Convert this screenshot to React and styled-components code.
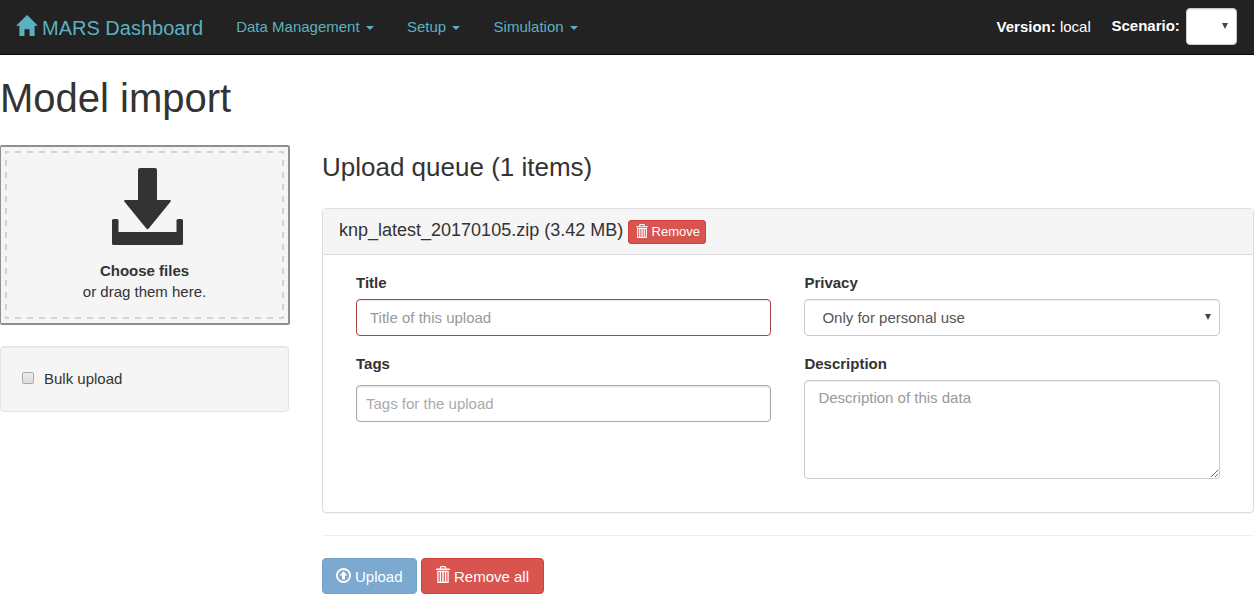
import React from "react";
import styled, { createGlobalStyle } from "styled-components";

const GlobalStyle = createGlobalStyle`
  *, *::before, *::after { box-sizing: border-box; }
  body {
    margin: 0;
    background: #fff;
    color: #333;
    font-family: "Liberation Sans", Arial, sans-serif;
    font-size: 15px;
    line-height: 21px;
    overflow: hidden;
  }
  input, select, textarea, button { font: inherit; }
`;

const Page = styled.div`
  width: 1254px;
`;

const Navbar = styled.nav`
  display: flex;
  align-items: flex-start;
  height: 55px;
  padding: 0 17px 0 16px;
  background: #222;
  border-bottom: 1px solid #090909;
`;

const Brand = styled.a`
  display: flex;
  gap: 4px;
  margin-right: 33px;
  padding-top: 15px;
  color: #5bb1c0;
  font-size: 20px;
  line-height: 26px;
`;

const HomeIcon = styled.svg`
  width: 22px;
  height: 21px;
  fill: currentColor;
`;

const Menu = styled.div`
  display: flex;
  gap: 33.1px;
  flex: 1;
  padding-top: 17px;
`;

const MenuItem = styled.a`
  display: flex;
  align-items: center;
  gap: 6.3px;
  color: #5bb1c0;
  line-height: 20px;

  &::after {
    content: "";
    margin-top: 2px;
    border: 4px solid transparent;
    border-top-color: currentColor;
    border-bottom: 0;
  }
`;

const Version = styled.div`
  margin-right: 20.7px;
  padding-top: 17px;
  line-height: 20px;
  color: #fff;
`;

const Scenario = styled.label`
  display: flex;
  gap: 6.2px;
  padding-top: 8px;
  color: #fff;
  font-weight: bold;
  line-height: 36px;
`;

const SelectBox = styled.div`
  display: grid;
  align-items: center;
  width: ${(p) => p.$width || "100%"};

  &::after {
    content: "";
    grid-area: 1 / 1;
    justify-self: end;
    margin: 0 9px 2px 0;
    border: 3px solid transparent;
    border-top: 6px solid #444;
    border-bottom: 0;
    pointer-events: none;
  }
`;

const Select = styled.select`
  grid-area: 1 / 1;
  appearance: none;
  width: 100%;
  height: 37px;
  padding: 0 17px;
  color: #555;
  background: #fff;
  border: 1px solid #ccc;
  border-radius: 4px;
  box-shadow: inset 0 1px 1px rgba(0, 0, 0, 0.075);
`;

const PageTitle = styled.h1`
  margin: 21px 0 25px;
  font-size: 40px;
  font-weight: 500;
  line-height: 44px;
`;

const Columns = styled.main`
  display: flex;
  gap: 32px;
`;

const Sidebar = styled.aside`
  width: 290px;
`;

const DropZone = styled.div`
  height: 180px;
  padding: 4px;
  background: #f5f5f5;
  border: 2px solid #8c8f93;
  border-left-width: 1px;
  border-radius: 2px;
`;

const dash = (direction) =>
  `repeating-linear-gradient(${direction}, #d3d3d3 0 6px, transparent 6px 12px)`;

const DropTarget = styled.div`
  display: flex;
  flex-direction: column;
  align-items: center;
  height: 168px;
  width: 279px;
  padding-top: 17px;
  background:
    ${dash("to right")} -2px 0 / 288px 2px no-repeat,
    ${dash("to right")} -2px 100% / 288px 2px no-repeat,
    ${dash("to bottom")} 0 -3px / 2px 180px no-repeat,
    ${dash("to bottom")} 100% -3px / 2px 180px no-repeat;
`;

const SaveIcon = styled.svg`
  width: 71px;
  height: 77px;
  margin: 0 0 15px 6px;
  fill: #333;
`;

const Well = styled.div`
  display: flex;
  align-items: center;
  gap: 10px;
  width: 289px;
  height: 66px;
  margin-top: 21px;
  padding: 0 0 2px 21px;
  background: #f5f5f5;
  border: 1px solid #e3e3e3;
  border-radius: 4px;
  box-shadow: inset 0 1px 1px rgba(0, 0, 0, 0.05);
`;

const Checkbox = styled.input`
  appearance: none;
  width: 12px;
  height: 12px;
  margin: 0 0 1px;
  background: linear-gradient(#eee, #dadada);
  border: 1px solid #aaa;
  border-radius: 2px;
`;

const Queue = styled.section`
  width: 932px;
`;

const QueueTitle = styled.h3`
  margin: 8px 0 26px;
  font-size: 26px;
  font-weight: 500;
  line-height: 29px;
`;

const Panel = styled.div`
  height: 305px;
  border: 1px solid #ddd;
  border-radius: 4px;
  box-shadow: 0 1px 1px rgba(0, 0, 0, 0.05);
`;

const PanelHeading = styled.div`
  display: flex;
  gap: 5px;
  height: 46px;
  padding: 11px 16px 0;
  background: #f5f5f5;
  border-bottom: 1px solid #ddd;
  border-radius: 3px 3px 0 0;
`;

const FileName = styled.span`
  font-size: 18px;
  line-height: 20px;
`;

const PanelBody = styled.div`
  display: grid;
  grid-template-columns: 415px 415.6px;
  column-gap: 33.4px;
  row-gap: 17px;
  padding: 17px 33px;
`;

const Field = styled.div`
  display: flex;
  flex-direction: column;
  gap: ${(p) => p.$gap || "6px"};
`;

const Label = styled.label`
  height: 21px;
  font-weight: bold;
`;

const TextInput = styled.input`
  height: 37px;
  padding: ${(p) => (p.$tags ? "0 9px" : "0 13px")};
  background: #fff;
  border: 1px solid ${(p) => (p.$tags ? "#aaa" : "#a94442")};
  border-radius: 4px;
  box-shadow: inset 0 1px ${(p) => (p.$tags ? "2px rgba(0, 0, 0, 0.13)" : "1px rgba(0, 0, 0, 0.075)")};

  &::placeholder { color: ${(p) => (p.$tags ? "#aaa" : "#999")}; opacity: 1; }
`;

const TextArea = styled.textarea`
  display: block;
  height: 99px;
  padding: 6px 13px;
  background: #fff;
  border: 1px solid #ccc;
  border-radius: 4px;
  box-shadow: inset 0 1px 1px rgba(0, 0, 0, 0.075);
  resize: vertical;

  &::placeholder { color: #999; opacity: 1; }
`;

const Divider = styled.hr`
  height: 1px;
  margin: 22px 0;
  background: #eee;
  border: 0;
`;

const Actions = styled.div`
  display: flex;
  gap: 4px;
`;

const colors = {
  danger: ["#d9534f", "#d43f3a"],
  primary: ["#7ca9d0", "#76a0c6"],
};

const Button = styled.button`
  display: flex;
  gap: 4px;
  flex: none;
  width: ${(p) => p.$width};
  height: 36px;
  padding: 7px 13px;
  color: #fff;
  background: ${(p) => colors[p.$tone][0]};
  border: 1px solid ${(p) => colors[p.$tone][1]};
  border-radius: 4px;
  line-height: 21px;
  white-space: nowrap;
`;

const SmallButton = styled(Button)`
  gap: 3.4px;
  height: 24px;
  padding: 3px 7px;
  border-radius: 3px;
  font-size: 13px;
  line-height: 15px;
`;

const ButtonIcon = styled.svg`
  flex: none;
  width: ${(p) => p.$w}px;
  height: ${(p) => p.$h}px;
  margin-top: ${(p) => p.$top || 0}px;
  margin-left: ${(p) => p.$left || 0}px;
  fill: currentColor;
`;

function Trash({ w, h, top, left }) {
  return (
    <ButtonIcon $w={w} $h={h} $top={top} $left={left} viewBox="0 0 1100 1300" preserveAspectRatio="none">
      <path
        fillRule="evenodd"
        d="M400 0h300q41 0 70.5 29.5T800 100v100h275q10 0 17.5 7.5t7.5 17.5v75H0v-75q0-10 7.5-17.5T25 200h275V100q0-41 29.5-70.5T400 0zM400 100v100h300V100zM100 370h900v880q0 20-15 35t-35 15H150q-20 0-35-15t-15-35zM200 460v740h90V460zM400 460v740h90V460zM610 460v740h90V460zM810 460v740h90V460z"
      />
    </ButtonIcon>
  );
}

export default function App() {
  return (
    <Page>
      <GlobalStyle />
      <Navbar>
        <Brand>
          <HomeIcon viewBox="0 0 1300 1240">
            <path d="M18 622l620-608q8-7 18.5-7t17.5 7l608 608q8 8 5.500 13t-12.500 5h-175v575q0 10-7.500 17.500t-17.500 7.500h-250q-10 0-17.500-7.500t-7.500-17.500v-375h-300v375q0 10-7.500 17.500t-17.500 7.500h-250q-10 0-17.500-7.500t-7.500-17.500v-575h-175q-10 0-12.500-5t5.500-13z" />
          </HomeIcon>
          MARS Dashboard
        </Brand>
        <Menu>
          <MenuItem>Data Management</MenuItem>
          <MenuItem>Setup</MenuItem>
          <MenuItem>Simulation</MenuItem>
        </Menu>
        <Version><b>Version:</b> local</Version>
        <Scenario>
          Scenario:
          <SelectBox $width="51px"><Select /></SelectBox>
        </Scenario>
      </Navbar>

      <PageTitle>Model import</PageTitle>

      <Columns>
        <Sidebar>
          <DropZone>
            <DropTarget>
              <SaveIcon viewBox="0 0 71 77">
                <path d="M28 0h15q2 0 2 2v30h13q1.500.2.700 1.500L36.700 60.500q-1.200 1.500-2.400 0L12.300 33.500Q11.500 32.200 13 32h13V2q0-2 2-2zM1.500 51H5q1.500 0 1.500 1.500V64h58V52.500q0-1.500 1.500-1.500h3.500q1.500 0 1.500 1.500v23q0 1.500-1.500 1.500h-68Q0 77 0 75.500v-23Q0 51 1.500 51z" />
              </SaveIcon>
              <b>Choose files</b>
              <span>or drag them here.</span>
            </DropTarget>
          </DropZone>
          <Well>
            <Checkbox type="checkbox" id="bulk" />
            <label htmlFor="bulk">Bulk upload</label>
          </Well>
        </Sidebar>

        <Queue>
          <QueueTitle>Upload queue (1 items)</QueueTitle>
          <Panel>
            <PanelHeading>
              <FileName>knp_latest_20170105.zip (3.42 MB)</FileName>
              <SmallButton $tone="danger" $width="78px">
                <Trash w={12} h={14} />
                Remove
              </SmallButton>
            </PanelHeading>
            <PanelBody>
              <Field>
                <Label>Title</Label>
                <TextInput placeholder="Title of this upload" />
              </Field>
              <Field>
                <Label>Privacy</Label>
                <SelectBox>
                  <Select><option>Only for personal use</option></Select>
                </SelectBox>
              </Field>
              <Field $gap="11px">
                <Label>Tags</Label>
                <TextInput $tags placeholder="Tags for the upload" />
              </Field>
              <Field>
                <Label>Description</Label>
                <TextArea placeholder="Description of this data" />
              </Field>
            </PanelBody>
          </Panel>
          <Divider />
          <Actions>
            <Button $tone="primary" $width="95px">
              <ButtonIcon $w={15} $h={15} $top={2} viewBox="0 0 15 15">
                <path
                  fillRule="evenodd"
                  d="M7.500 0a7.500 7.500 0 1 1 0 15a7.500 7.500 0 0 1 0-15zM7.500 1.900a5.600 5.600 0 1 0 0 11.200a5.600 5.600 0 0 0 0-11.200zM7.500 3.200L11.500 7.500H9V11.500H6V7.500H3.500z"
                />
              </ButtonIcon>
              Upload
            </Button>
            <Button $tone="danger" $width="123px">
              <Trash w={14} h={17} left={1} />
              Remove all
            </Button>
          </Actions>
        </Queue>
      </Columns>
    </Page>
  );
}
